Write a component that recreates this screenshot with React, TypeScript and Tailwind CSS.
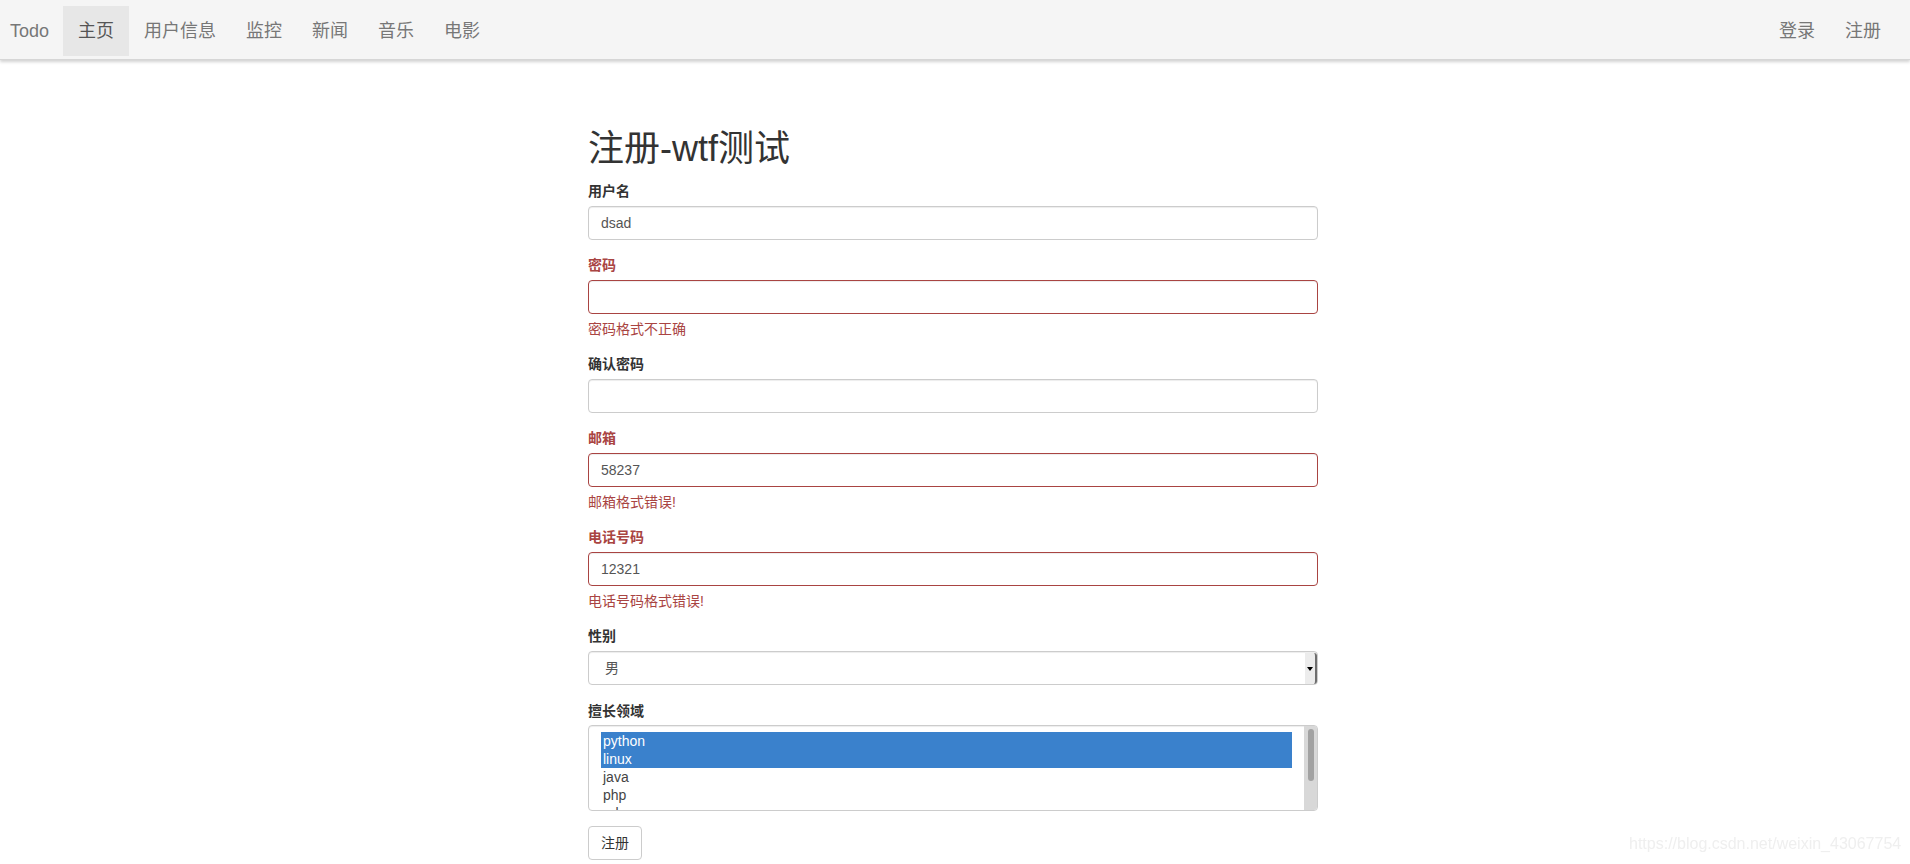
const FONT = "font-['Liberation_Sans','Noto_Sans_CJK_SC',sans-serif]";

const NAV_LEFT = ['用户信息', '监控', '新闻', '音乐', '电影'];
const SKILLS = ['python', 'linux', 'java', 'php', 'ruby'];

function Field({
  label,
  value = '',
  error,
}: {
  label: string;
  value?: string;
  error?: string;
}) {
  const bad = !!error;
  return (
    <div className="mb-[15px]">
      <div className={`text-[14px] leading-[20px] font-bold mb-[5px] ${bad ? 'text-[#a94442]' : 'text-[#333]'}`}>
        {label}
      </div>
      <div
        className={`h-[34px] rounded-[4px] border px-[12px] flex items-center text-[14px] text-[#555] bg-white shadow-[inset_0_1px_1px_rgba(0,0,0,0.075)] ${
          bad ? 'border-[#a94442]' : 'border-[#ccc]'
        }`}
      >
        {value}
      </div>
      {bad && <div className="mt-[5px] text-[14px] leading-[20px] text-[#a94442]">{error}</div>}
    </div>
  );
}

export default function App() {
  return (
    <div className={`${FONT} bg-white min-h-screen relative`}>
      {/* navbar */}
      <nav className="h-[60px] bg-[#f5f5f5] border-b border-[#d6d6d6] shadow-[0_2px_3px_rgba(0,0,0,0.18)] flex items-start justify-between pt-[6px]">
        <div className="flex text-[18px] leading-[50px] text-[#777]">
          <span className="pl-[10px] pr-[14px]">Todo</span>
          <span className="px-[15px] bg-[#e7e7e7] text-[#555]">主页</span>
          {NAV_LEFT.map((n) => (
            <span key={n} className="px-[15px]">
              {n}
            </span>
          ))}
        </div>
        <div className="flex text-[18px] leading-[50px] text-[#777] pr-[14px]">
          <span className="px-[15px]">登录</span>
          <span className="px-[15px]">注册</span>
        </div>
      </nav>

      <div className="flex justify-center pr-[4px]">
        <div className="w-[730px]">
          <h1 className="mt-[69px] mb-[12px] text-[36px] leading-[40px] font-normal text-[#333]">注册-wtf测试</h1>

          <Field label="用户名" value="dsad" />
          <Field label="密码" error="密码格式不正确" />
          <Field label="确认密码" />
          <Field label="邮箱" value="58237" error="邮箱格式错误!" />
          <Field label="电话号码" value="12321" error="电话号码格式错误!" />

          {/* gender select */}
          <div className="mt-[2px] mb-[16px]">
            <div className="text-[14px] leading-[20px] font-bold mb-[5px] text-[#333]">性别</div>
            <div className="relative h-[34px] rounded-[4px] border border-[#ccc] bg-white flex items-center pl-[16px] text-[14px] text-[#555] shadow-[inset_0_1px_1px_rgba(0,0,0,0.075)]">
              男
              <div className="absolute right-0 top-[1px] bottom-0 w-[12px] bg-[#ececec] border-r-2 border-[#6e6e6e] rounded-r-[3px] flex items-center justify-center">
                <div className="w-0 h-0 border-x-[3px] border-x-transparent border-t-[4px] border-t-black" />
              </div>
            </div>
          </div>

          {/* skills multi-select */}
          <div>
            <div className="text-[14px] leading-[20px] font-bold mb-[4px] text-[#333]">擅长领域</div>
            <div className="relative h-[86px] rounded-[4px] border border-[#ccc] bg-white overflow-hidden shadow-[inset_0_1px_1px_rgba(0,0,0,0.075)]">
              <div className="pt-[6px] pl-[12px] pr-[25px]">
                {SKILLS.map((s, i) => (
                  <div
                    key={s}
                    className={`px-[2px] text-[14px] leading-[18px] ${
                      i < 2 ? 'bg-[#3a81cc] text-white' : 'text-[#444]'
                    }`}
                  >
                    {s}
                  </div>
                ))}
              </div>
              <div className="absolute right-0 top-0 bottom-0 w-[13px] bg-[#d8d8d8] flex justify-center">
                <div className="mt-[3px] w-[6px] h-[52px] rounded-full bg-[#a2a2a2]" />
              </div>
            </div>
          </div>

          <button className="mt-[15px] h-[34px] px-[12px] rounded-[4px] border border-[#ccc] bg-white text-[14px] text-[#333]">
            注册
          </button>
        </div>
      </div>

      {/* watermark */}
      <div className="fixed left-[1629px] top-[835px] text-[16px] leading-[18px] text-[#efefef] font-['Liberation_Sans',sans-serif]">
        https://blog.csdn.net/weixin_43067754
      </div>
    </div>
  );
}
